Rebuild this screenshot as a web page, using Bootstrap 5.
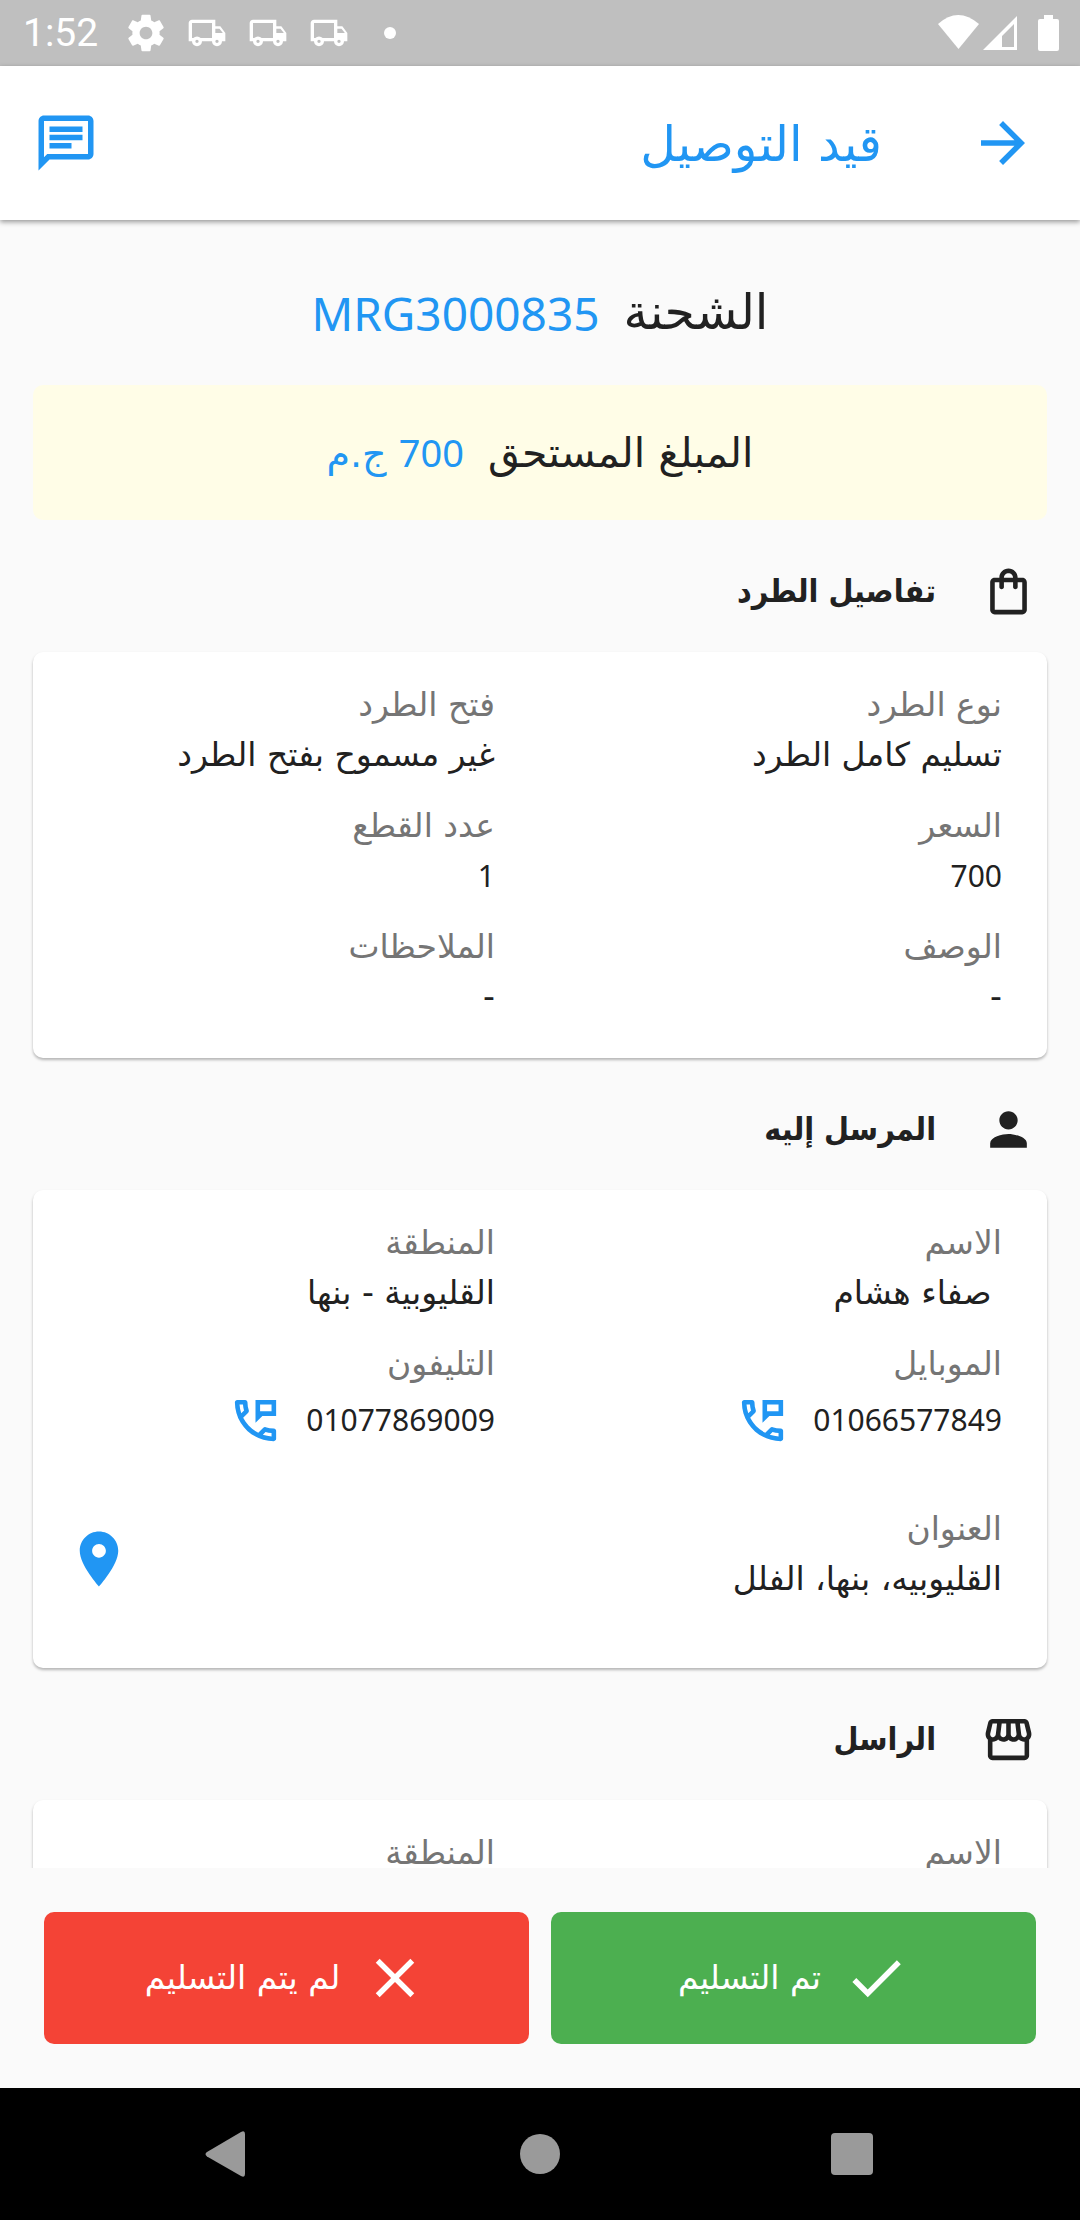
<!DOCTYPE html>
<html lang="ar" dir="rtl">
<head>
<meta charset="utf-8">
<meta name="viewport" content="width=device-width, initial-scale=1">
<title>قيد التوصيل</title>
<link href="https://cdn.jsdelivr.net/npm/bootstrap@5.3.0/dist/css/bootstrap.min.css" rel="stylesheet">
<style>
  :root { --app-blue: #2196f3; --app-ink: #212121; --app-muted: #757575; --app-bg: #fafafa; }
  body { background: var(--app-bg); color: var(--app-ink); font-family: "DejaVu Sans", sans-serif; font-size: 33px; line-height: 50px; }
  svg { display: block; fill: currentColor; flex: none; }
  .icon-lg { width: 66px; height: 66px; }
  .icon-md { width: 55px; height: 55px; }
  .blue-text { color: var(--app-blue); }
  .latin { font-family: "Noto Sans", "Open Sans", sans-serif; }
  .info-card .latin { font-size: 30px; }

  .status-bar { height: 66px; background: #bfbfbf; color: #fff; padding: 0 20px 0 23px; font-family: Roboto, sans-serif; font-size: 39px; }
  .status-icon { width: 40px; height: 40px; }
  .status-icons { gap: 21px; margin-left: 28px; }

  .app-bar { height: 154px; background: #fff; padding: 0 44px 0 33px; box-shadow: 0 2px 5px rgba(0,0,0,.4); z-index: 1; }
  .app-title { font-size: 49px; line-height: 66px; margin: 0; padding: 4px 88px 0 0; font-weight: 400; }

  .shipment { padding: 0 33px; }
  .shipment-id { font-size: 49px; line-height: 66px; padding: 60px 0 39px; gap: 24px; font-weight: 400; margin: 0; }
  .shipment-id .latin { font-size: 46px; }
  .amount-due { background: #fffde7; border-radius: 10px; height: 135px; font-size: 41px; gap: 24px; }
  .amount-due .blue-text { font-size: 38px; }
  .section-title { height: 132px; padding: 10px 11px 0 0; gap: 45px; margin: 0; font-family: "DejaVu Sans Condensed", "DejaVu Sans", sans-serif; font-size: 32px; line-height: 50px; font-weight: 700; }
  .info-card { --bs-card-border-width: 0; --bs-card-border-radius: 10px; --bs-card-color: var(--app-ink); box-shadow: 0 2px 3px rgba(0,0,0,.28); padding: 28px 0 36px; }
  .info-card.roomy { padding-bottom: 64px; }
  .info-card dl { margin: 0; row-gap: 21px; }
  .info-card dt { font-weight: 400; color: var(--app-muted); }
  .info-card dd { margin: 0; }
  .field { padding-right: 45px; }
  .info-card dd.phone-line { height: 94px; padding-bottom: 32px; gap: 23px; }
  .map-link { padding: 22px 0 0 33px; }

  .actions { padding: 44px; gap: 22px; }
  .action-btn { --bs-btn-color: #fff; --bs-btn-border-width: 0; --bs-btn-border-radius: 10px; --bs-btn-font-size: 33px; --bs-btn-line-height: 50px; height: 132px; gap: 22px; flex: 1 1 0; }
  .btn-done { --bs-btn-bg: #4caf50; --bs-btn-hover-bg: #43a047; --bs-btn-hover-color: #fff; }
  .btn-failed { --bs-btn-bg: #f44336; --bs-btn-hover-bg: #e53935; --bs-btn-hover-color: #fff; }
  .system-nav { height: 132px; background: #000; padding: 0 72px; }
  .system-nav .btn { --bs-btn-color: #9a9a9a; --bs-btn-hover-color: #fff; --bs-btn-border-width: 0; }
</style>
<script src="https://cdn.jsdelivr.net/npm/bootstrap@5.3.0/dist/js/bootstrap.bundle.min.js"></script>
</head>
<body class="vh-100 d-flex flex-column overflow-hidden">

<svg class="d-none" aria-hidden="true">
  <symbol id="truck" viewBox="0 0 24 24"><path fill-rule="evenodd" d="M3 4h14v4h3l3 4v5h-2a3 3 0 0 1-6 0H9a3 3 0 0 1-6 0H1V6c0-1.100.9-2 2-2zm0 2v9h.8a3 3 0 0 1 4.400 0H15V6zm14 3.500V12h4.500l-2-2.500zM6 16a1 1 0 1 0 0 2 1 1 0 0 0 0-2zm12 0a1 1 0 1 0 0 2 1 1 0 0 0 0-2z"/></symbol>
  <symbol id="phone-msg" viewBox="0 0 24 24"><path fill-rule="evenodd" d="M20 15.500c-1.250 0-2.450-.2-3.570-.57-.1-.03-.21-.05-.31-.05-.26 0-.51.1-.71.29l-2.200 2.200c-2.830-1.440-5.150-3.750-6.590-6.580l2.200-2.210c.28-.27.36-.66.25-1.010C8.700 6.450 8.500 5.250 8.500 4c0-.55-.45-1-1-1H4c-.55 0-1 .45-1 1 0 9.390 7.610 17 17 17 .55 0 1-.45 1-1v-3.500c0-.55-.45-1-1-1zM5.030 5h1.500c.07.88.22 1.750.46 2.590L5.790 8.800c-.41-1.210-.67-2.480-.76-3.800zM19 18.970c-1.320-.09-2.590-.35-3.800-.75l1.200-1.200c.85.24 1.710.39 2.600.45v1.500zM12 3v10l3-3h6V3h-9zm7 5h-5V5h5v3z"/></symbol>
</svg>

<div class="status-bar d-flex align-items-center justify-content-between flex-shrink-0" dir="ltr">
  <div class="d-flex align-items-center">
    <span>1:52</span>
    <div class="status-icons d-flex align-items-center">
      <svg class="status-icon" viewBox="1 1 22 22"><path d="M19.430 12.980c.04-.32.07-.64.07-.98s-.03-.66-.07-.98l2.110-1.650c.19-.15.24-.42.12-.64l-2-3.460c-.12-.22-.39-.3-.61-.22l-2.490 1c-.52-.4-1.080-.73-1.690-.98l-.38-2.650C14.460 2.180 14.250 2 14 2h-4c-.25 0-.46.18-.49.42l-.38 2.650c-.61.25-1.170.59-1.690.98l-2.490-1c-.23-.09-.49 0-.61.22l-2 3.460c-.13.22-.07.49.12.64l2.110 1.650c-.04.32-.07.65-.07.98s.03.66.07.98l-2.110 1.650c-.19.15-.24.42-.12.64l2 3.460c.12.22.39.3.61.22l2.490-1c.52.4 1.080.73 1.690.98l.38 2.650c.03.24.24.42.49.42h4c.25 0 .46-.18.49-.42l.38-2.650c.61-.25 1.170-.59 1.690-.98l2.490 1c.23.09.49 0 .61-.22l2-3.460c.12-.22.07-.49-.12-.64l-2.110-1.650zM12 15.500c-1.930 0-3.500-1.570-3.500-3.500s1.570-3.500 3.500-3.500 3.500 1.570 3.500 3.500-1.570 3.500-3.500 3.500z"/></svg>
      <svg class="status-icon"><use href="#truck"/></svg>
      <svg class="status-icon"><use href="#truck"/></svg>
      <svg class="status-icon"><use href="#truck"/></svg>
      <svg class="status-icon" viewBox="0 0 40 40"><circle cx="20" cy="20" r="6"/></svg>
    </div>
  </div>
  <svg width="122" height="38" viewBox="0 0 122 38"><path d="M0 10Q20-8 41 10L20.500 35z"/><path fill-rule="evenodd" d="M45 36L79 2v34zm19-3h12V10L64 22z"/><path d="M106 1h9v4h4q2 0 2 2v28q0 2-2 2h-17q-2 0-2-2V7q0-2 2-2h4z"/></svg>
</div>

<header class="app-bar d-flex align-items-center flex-shrink-0 position-relative blue-text">
  <a href="#" class="blue-text" aria-label="رجوع"><svg class="icon-lg" viewBox="0 0 24 24"><path d="M12 4l-1.410 1.410L16.170 11H4v2h12.170l-5.580 5.590L12 20l8-8z"/></svg></a>
  <h1 class="app-title flex-grow-1">قيد التوصيل</h1>
  <a href="#" class="blue-text" aria-label="المحادثة"><svg class="icon-lg" viewBox="0 0 24 24"><path d="M4 4h16v12H5.170L4 17.170V4m0-2c-1.100 0-1.990.9-1.990 2L2 22l4-4h14c1.100 0 2-.9 2-2V4c0-1.100-.9-2-2-2H4zm2 10h8v2H6v-2zm0-3h12v2H6V9zm0-3h12v2H6V6z"/></svg></a>
</header>

<main class="shipment flex-grow-1 overflow-hidden">
  <h2 class="shipment-id d-flex justify-content-center"><span>الشحنة</span><span class="latin blue-text">MRG3000835</span></h2>
  <div class="amount-due d-flex justify-content-center align-items-center"><span>المبلغ المستحق</span><span class="blue-text"><span class="latin">700</span> ج.م</span></div>

  <h3 class="section-title d-flex align-items-center">
    <svg class="icon-md" viewBox="0 0 24 24"><path d="M18 6h-2c0-2.210-1.790-4-4-4S8 3.790 8 6H6c-1.100 0-2 .9-2 2v12c0 1.100.9 2 2 2h12c1.100 0 2-.9 2-2V8c0-1.100-.9-2-2-2zm-6-2c1.100 0 2 .9 2 2h-4c0-1.100.9-2 2-2zm6 16H6V8h2v2c0 .55.45 1 1 1s1-.45 1-1V8h4v2c0 .55.45 1 1 1s1-.45 1-1V8h2v12z"/></svg>
    تفاصيل الطرد
  </h3>
  <section class="card info-card">
    <dl class="d-flex flex-wrap">
      <div class="w-50 field"><dt>نوع الطرد</dt><dd>تسليم كامل الطرد</dd></div>
      <div class="w-50 field"><dt>فتح الطرد</dt><dd>غير مسموح بفتح الطرد</dd></div>
      <div class="w-50 field"><dt>السعر</dt><dd class="latin">700</dd></div>
      <div class="w-50 field"><dt>عدد القطع</dt><dd class="latin">1</dd></div>
      <div class="w-50 field"><dt>الوصف</dt><dd>-</dd></div>
      <div class="w-50 field"><dt>الملاحظات</dt><dd>-</dd></div>
    </dl>
  </section>

  <h3 class="section-title d-flex align-items-center">
    <svg class="icon-md" viewBox="0 0 24 24"><path d="M12 12c2.210 0 4-1.790 4-4s-1.790-4-4-4-4 1.790-4 4 1.790 4 4 4zm0 2c-2.670 0-8 1.340-8 4v2h16v-2c0-2.660-5.330-4-8-4z"/></svg>
    المرسل إليه
  </h3>
  <section class="card info-card roomy">
    <dl class="d-flex flex-wrap">
      <div class="w-50 field"><dt>الاسم</dt><dd>&nbsp;صفاء هشام</dd></div>
      <div class="w-50 field"><dt>المنطقة</dt><dd>القليوبية - بنها</dd></div>
      <div class="w-50 field"><dt>الموبايل</dt><dd class="phone-line latin d-flex align-items-center">01066577849<a href="tel:01066577849" class="blue-text" aria-label="اتصال"><svg class="icon-md"><use href="#phone-msg"/></svg></a></dd></div>
      <div class="w-50 field"><dt>التليفون</dt><dd class="phone-line latin d-flex align-items-center">01077869009<a href="tel:01077869009" class="blue-text" aria-label="اتصال"><svg class="icon-md"><use href="#phone-msg"/></svg></a></dd></div>
      <div class="flex-grow-1 field"><dt>العنوان</dt><dd>القليوبيه، بنها، الفلل</dd></div>
      <div class="map-link"><a href="#" class="blue-text" aria-label="الخريطة"><svg class="icon-lg" viewBox="0 0 24 24"><path d="M12 2C8.130 2 5 5.130 5 9c0 5.250 7 13 7 13s7-7.750 7-13c0-3.870-3.130-7-7-7zm0 9.500c-1.380 0-2.500-1.120-2.500-2.500s1.120-2.500 2.500-2.500 2.500 1.120 2.500 2.500-1.120 2.500-2.500 2.500z"/></svg></a></div>
    </dl>
  </section>

  <h3 class="section-title d-flex align-items-center">
    <svg class="icon-md" viewBox="0 0 24 24"><path d="M21.900 8.890l-1.050-4.370c-.22-.9-1-1.520-1.910-1.520H5.050c-.9 0-1.690.63-1.900 1.520L2.100 8.890c-.24 1.020-.02 2.060.62 2.880.08.11.19.19.28.29V19c0 1.100.9 2 2 2h14c1.100 0 2-.9 2-2v-6.940c.09-.09.2-.18.28-.28.64-.82.87-1.870.62-2.890zm-2.990-3.900l1.050 4.370c.1.42.01.84-.25 1.170-.14.18-.44.47-.94.47-.61 0-1.140-.49-1.210-1.140L16.980 5l1.930-.01zM13 5h1.960l.54 4.520c.05.39-.07.78-.33 1.070-.22.26-.54.41-.95.41-.67 0-1.220-.59-1.220-1.310V5zM8.490 9.520L9.040 5H11v4.690c0 .72-.55 1.310-1.290 1.310-.34 0-.65-.15-.89-.41-.25-.29-.37-.68-.33-1.070zm-4.450-.16L5.050 5h1.970l-.58 4.860c-.08.65-.6 1.140-1.210 1.140-.49 0-.8-.29-.93-.47-.27-.32-.36-.75-.26-1.170zM5 19v-6.030c.08.01.15.03.23.03.87 0 1.660-.36 2.240-.95.6.6 1.400.95 2.310.95.87 0 1.650-.36 2.230-.93.59.57 1.390.93 2.290.93.84 0 1.640-.35 2.240-.95.58.59 1.370.95 2.240.95.08 0 .15-.02.23-.03V19H5z"/></svg>
    الراسل
  </h3>
  <section class="card info-card">
    <dl class="d-flex flex-wrap">
      <div class="w-50 field"><dt>الاسم</dt></div>
      <div class="w-50 field"><dt>المنطقة</dt></div>
    </dl>
  </section>
</main>

<footer class="actions d-flex flex-shrink-0">
  <button type="button" class="btn action-btn btn-done d-flex align-items-center justify-content-center"><svg class="icon-lg" viewBox="0 0 24 24"><path d="M9 16.170L4.830 12l-1.420 1.410L9 19 21 7l-1.410-1.410z"/></svg>تم التسليم</button>
  <button type="button" class="btn action-btn btn-failed d-flex align-items-center justify-content-center"><svg class="icon-lg" viewBox="0 0 24 24"><path d="M19 6.410L17.590 5 12 10.590 6.410 5 5 6.410 10.590 12 5 17.590 6.410 19 12 13.410 17.590 19 19 17.590 13.410 12z"/></svg>لم يتم التسليم</button>
</footer>

<nav class="system-nav d-flex align-items-center justify-content-around flex-shrink-0" dir="ltr">
  <button type="button" class="btn p-0" aria-label="رجوع"><svg class="icon-lg" viewBox="0 0 66 66"><path d="M12 31Q9 33 12 35.500L46 55Q50 57 50 53V13Q50 9 46 11z"/></svg></button>
  <button type="button" class="btn p-0" aria-label="الرئيسية"><svg class="icon-lg" viewBox="0 0 66 66"><circle cx="33" cy="33" r="20"/></svg></button>
  <button type="button" class="btn p-0" aria-label="التطبيقات الأخيرة"><svg class="icon-lg" viewBox="0 0 66 66"><rect x="12" y="12" width="42" height="42" rx="4"/></svg></button>
</nav>
</body>
</html>
